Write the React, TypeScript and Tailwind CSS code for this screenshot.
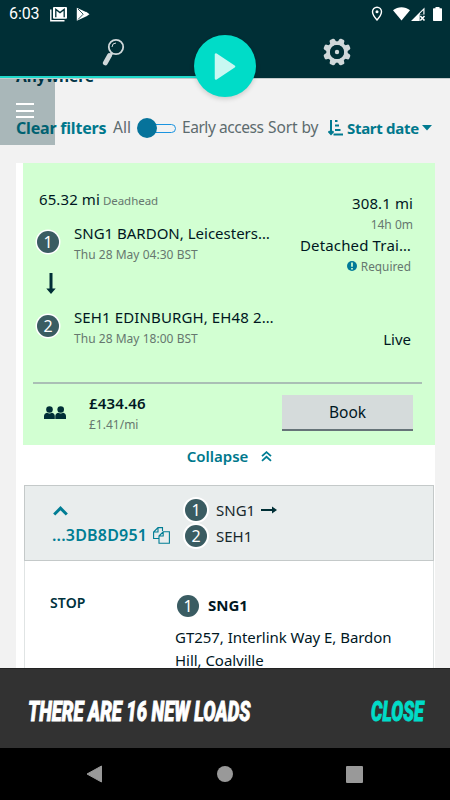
import { ReactNode } from 'react'
import { clsx } from 'clsx'

type BadgeProps = {
  children: ReactNode
  className?: string
}

// Numbered stop marker
function StopBadge({ children, className }: BadgeProps) {
  return (
    <span
      className={clsx(
        'flex size-[22px] shrink-0 items-center justify-center rounded-full bg-[#3a5c62] text-[16px] leading-none text-white',
        className
      )}
    >
      {children}
    </span>
  )
}

function StatusBar() {
  return (
    <div className="flex h-[28px] items-center pl-[9px] pr-[8px] text-white">
      <span className="font-[Roboto] text-[16px] leading-none tracking-[-0.1px]">6:03</span>
      {/* Gmail */}
      <svg className="ml-[11px]" width="17" height="15" viewBox="0 0 17 15" fill="none">
        <path d="M.8 2.500V13.700h13.700" stroke="#fff" strokeWidth="1.400" />
        <rect x="3" y="0" width="14" height="11.800" rx="1" fill="#fff" />
        <path d="M5.800 10.300V2.400L10 5.600l4.200-3.200v7.900" stroke="#002f36" strokeWidth="1.300" />
      </svg>
      {/* Play store */}
      <svg className="ml-[9px]" width="14" height="15" viewBox="0 0 14 15">
        <path d="M.8.800v13L10 9.400V5z" fill="#fff" />
        <path d="M2 2l5.200 5.200L2 12.500" fill="none" stroke="#002f36" strokeWidth=".8" />
        <path d="M8 7.200l2.200-2.400 3.300 2.400-3.300 2.400z" fill="#fff" />
      </svg>
      <div className="ml-auto flex items-center">
        <svg width="12" height="16" viewBox="0 0 12 16" fill="none">
          <path d="M6 1.300a4.500 4.500 0 0 0-4.500 4.500C1.500 9 6 14 6 14s4.500-5 4.500-8.200A4.500 4.500 0 0 0 6 1.300z" stroke="#fff" strokeWidth="1.400" />
          <circle cx="6" cy="5.800" r="1.500" fill="#fff" />
        </svg>
        <svg className="ml-[10px]" width="17" height="14" viewBox="0 0 17 14">
          <path d="M0 3.300C5-.700 12-.700 17 3.300L8.500 13.500z" fill="#fff" />
        </svg>
        <svg className="ml-[1px]" width="15" height="15" viewBox="0 0 15 15">
          <path d="M13.500.5v7H8.700v6.500H0z" fill="#fff" />
          <path d="M12.300 3.200v4.300H9V6.500z" fill="#002f36" />
          <path d="M9.300 9l4.200 4.500m0-4.500l-4.200 4.500" stroke="#fff" strokeWidth="1.600" />
        </svg>
        <svg className="ml-[7px]" width="9" height="14" viewBox="0 0 9 14">
          <path d="M2.500 0h4v1.300H8.300a.7.7 0 0 1 .7.7v11.300a.7.7 0 0 1-.7.7H.7a.7.7 0 0 1-.7-.7V2a.7.7 0 0 1 .7-.7h1.800z" fill="#fff" />
        </svg>
      </div>
    </div>
  )
}

const gearTeeth = [22.5, 67.5, 112.5, 157.5, 202.5, 247.5, 292.5, 337.5]

function Header() {
  return (
    <header className="relative z-10 h-[78px] shrink-0 bg-[#002f36]">
      <StatusBar />
      <div className="flex h-[48px] justify-between pl-[101px] pr-[99px] pt-[10px]">
        <svg width="24" height="28" viewBox="0 0 24 28" fill="none">
          <circle cx="15" cy="9" r="7.200" stroke="#d0d8da" strokeWidth="1.800" />
          <path d="M11 9a4 4 0 0 1 4-4" stroke="#d0d8da" strokeWidth="1" />
          <path d="M8.500 17.500L4.300 25" stroke="#d0d8da" strokeWidth="4.800" strokeLinecap="round" />
          <path d="M11.300 14.800l-2 3" stroke="#d0d8da" strokeWidth="2.500" />
        </svg>
        <svg width="28" height="28" viewBox="-14 -14 28 28" fill="#d0d8da">
          {gearTeeth.map((angle) => (
            <path
              key={angle}
              d="M-3.500-8L-2.800-12.400Q-2.500-13.800-1.200-13.800H1.200Q2.500-13.800 2.800-12.400L3.500-8z"
              transform={`rotate(${angle})`}
            />
          ))}
          <circle r="8.900" fill="none" stroke="#d0d8da" strokeWidth="3.600" />
          <circle r="6.900" fill="#002f36" />
          <circle r="2.200" />
        </svg>
      </div>
      {/* Active tab indicator */}
      <div className="h-[2px] w-[225px] bg-[#1fd9cb]" />
      <button className="absolute left-[194px] top-[35px] flex size-[62px] items-center justify-center rounded-full bg-[#00dcc8] shadow-[0_2px_5px_rgba(0,0,0,0.16)]">
        <svg width="22" height="27" viewBox="0 0 22 27">
          <path d="M2 1.500v24L20 13.500z" fill="#c8f8f2" stroke="#c8f8f2" strokeWidth="2.500" strokeLinejoin="round" />
        </svg>
      </button>
    </header>
  )
}

function Filters() {
  return (
    <div className="relative h-[85px] shrink-0">
      <div className="h-[10px] pl-[16px]">
        <div className="-translate-y-[15px] text-[15.500px] font-bold leading-[24px] text-[#003648]">Anywhere</div>
      </div>
      <div className="mt-[27px] flex h-[24px] items-center whitespace-nowrap pl-[16px] text-[15.500px] text-[#5d6b6e]">
        <span className="w-[97px] text-[16px] font-bold tracking-[-0.200px] text-[#00788c]">Clear filters</span>
        <span className="w-[24px]">All</span>
        <span className="flex w-[45px] items-center">
          <span className="z-[1] size-[20px] rounded-full bg-[#06739b]" />
          <span className="-ml-[2px] h-[9px] w-[21px] rounded-r-full border border-[#1b94e0]" />
        </span>
        <span className="w-[86px] tracking-[-0.450px]">Early access</span>
        <span className="w-[60px] tracking-[-0.100px]">Sort by</span>
        <svg className="shrink-0" width="15" height="16" viewBox="0 0 15 16" fill="none" stroke="#007a90">
          <path d="M3 0v14M.5 11.300L3 14l2.500-2.700" strokeWidth="2" />
          <path d="M7 1h2.500M7 5.500h4M7 10h5.500M5.500 14.500H15" strokeWidth="1.900" />
        </svg>
        <span className="ml-[4px] w-[75px] text-[15px] font-bold tracking-[-0.300px] text-[#00788c]">Start date</span>
        <svg className="shrink-0" width="10" height="6" viewBox="0 0 10 6" fill="#007a90">
          <path d="M0 0h10L5 5.500z" />
        </svg>
      </div>
      {/* Drawer handle floats over the filters */}
      <div className="absolute left-0 top-0 h-[66px] w-[54.500px] bg-[#002f36]/30 pl-[16px] pt-[24px]">
        <div className="h-[2px] w-[18px] bg-white" />
        <div className="mt-[4.500px] h-[2px] w-[18px] bg-white" />
        <div className="mt-[4.500px] h-[2px] w-[18px] bg-white" />
      </div>
    </div>
  )
}

function LoadCard() {
  return (
    <div className="ml-[7px] h-[282px] bg-[#d2ffd2] pl-[10px] pr-[13px] text-[#00171f]">
      <div className="flex h-[221px] border-b-2 border-[#aabfb5]">
        <div className="w-[245px] pt-[24px]">
          <div className="flex h-[24px] items-baseline gap-[3px] whitespace-nowrap pl-[6px]">
            <span className="text-[15px] leading-[24px] tracking-[0.100px]">65.32 mi</span>
            <span className="text-[11.500px] leading-[24px] tracking-[-0.050px] text-[#66776f]">Deadhead</span>
          </div>
          <div className="flex pl-[4px] pt-[10px]">
            <StopBadge className="mt-[10px] ring-[1.500px] ring-white">1</StopBadge>
            <div className="ml-[15px]">
              <div className="whitespace-nowrap text-[15px] leading-[24px]">SNG1 BARDON, Leicesters…</div>
              <div className="whitespace-nowrap text-[12px] leading-[20px] tracking-[0.030px] text-[#66776f]">Thu 28 May 04:30 BST</div>
            </div>
          </div>
          <svg className="ml-[12px] mt-[8px]" width="12" height="22" viewBox="0 0 12 22">
            <path d="M4.500 0h3v15.500h3.200L6 21 1.300 15.500h3.200z" fill="#002f36" />
          </svg>
          <div className="flex pl-[4px] pt-[10px]">
            <StopBadge className="mt-[10px] ring-[1.500px] ring-white">2</StopBadge>
            <div className="ml-[15px]">
              <div className="whitespace-nowrap text-[15px] leading-[24px] tracking-[0.120px]">SEH1 EDINBURGH, EH48 2…</div>
              <div className="whitespace-nowrap text-[12px] leading-[20px] tracking-[0.030px] text-[#66776f]">Thu 28 May 18:00 BST</div>
            </div>
          </div>
        </div>
        <div className="flex flex-1 flex-col items-end whitespace-nowrap pr-[9px] pt-[28px]">
          <div className="text-[15px] leading-[24px] tracking-[0.100px]">308.1 mi</div>
          <div className="text-[12px] leading-[19px] text-[#66776f]">14h 0m</div>
          <div className="mr-[2px] text-[15px] leading-[22px] tracking-[0.150px]">Detached Trai…</div>
          <div className="mr-[2px] flex items-center gap-[4px] text-[11.800px] leading-[20px] text-[#66776f]">
            <svg width="10" height="10" viewBox="0 0 10 10">
              <circle cx="5" cy="5" r="5" fill="#007a98" />
              <path d="M5 1.500v4.300M5 7v1.500" stroke="#d2ffd2" strokeWidth="1.700" />
            </svg>
            Required
          </div>
          <div className="mr-[2px] mt-[51px] text-[15px] leading-[24px]">Live</div>
        </div>
      </div>
      <div className="flex h-[61px]">
        <svg className="ml-[11px] mt-[22px]" width="22" height="14" viewBox="0 0 22 14" fill="#002f36">
          <circle cx="5.500" cy="3.500" r="3.300" />
          <path d="M0 13V10.200Q0 7.400 3 6.800Q5.500 8.100 8 6.800Q10.800 7.400 10.800 10.200V13z" />
          <circle cx="16.700" cy="3.500" r="3.300" />
          <path d="M11.300 13V10.200Q11.300 7.400 14.200 6.800Q16.700 8.100 19.200 6.800Q22 7.400 22 10.200V13z" />
        </svg>
        <div className="ml-[23px] pt-[8px]">
          <div className="text-[15px] font-semibold leading-[23px] tracking-[0.150px]">£434.46</div>
          <div className="text-[12px] leading-[20px] text-[#66776f]">£1.41/mi</div>
        </div>
        <button className="ml-auto mr-[9px] mt-[11px] h-[36px] w-[131px] border-b-2 border-[#667378] bg-[#d5dbdb] text-[15.500px] leading-[33px]">
          Book
        </button>
      </div>
    </div>
  )
}

function Details() {
  return (
    <div className="ml-[8px] mr-px">
      <div className="flex h-[76px] border border-[#c4c9c9] bg-[#e9eded]">
        <div className="w-[160px] pl-[27px] pt-[20px] text-[#007d94]">
          <svg className="ml-px" width="15" height="10" viewBox="0 0 15 10" fill="none">
            <path d="M1.200 8.500L7.500 2.200l6.300 6.300" stroke="#007d94" strokeWidth="3" />
          </svg>
          <div className="mt-[7px] flex h-[24px] items-center">
            <span className="w-[95px] text-[16px] font-semibold tracking-[0.200px]">...3DB8D951</span>
            <svg className="ml-[6px]" width="17" height="17" viewBox="0 0 17 17" fill="none" stroke="#007d94" strokeWidth="1.100">
              <path d="M6 11.500H.6V5L5 .6h4.500V4M5 .6V5H.6" />
              <path d="M6 9l4.200-4.200h6.200v11.500H6zM10.200 4.800V9H6" />
            </svg>
          </div>
        </div>
        <div className="pt-[11px] text-[15px] text-[#16282c]">
          <div className="flex h-[26px] items-center">
            <StopBadge className="ring-2 ring-white">1</StopBadge>
            <span className="ml-[9px]">SNG1</span>
            <svg className="ml-[6px]" width="16" height="8" viewBox="0 0 16 8">
              <path d="M0 3h11V.5L16 4l-5 3.500V5H0z" fill="#002f36" />
            </svg>
          </div>
          <div className="flex h-[26px] items-center">
            <StopBadge className="ring-2 ring-white">2</StopBadge>
            <span className="ml-[9px]">SEH1</span>
          </div>
        </div>
      </div>
      <div className="flex h-[240px] border-x border-[#e0e4e4]">
        <div className="w-[150px] pl-[25px] pt-[31px] text-[14px] font-semibold leading-[22px] tracking-[0.150px] text-[#00323d]">STOP</div>
        <div className="pt-[32px] text-[#00171f]">
          <div className="flex h-[25px] items-center pl-[2px]">
            <StopBadge>1</StopBadge>
            <span className="ml-[9px] text-[15px] font-bold">SNG1</span>
          </div>
          <div className="mt-[8px] w-[235px] whitespace-nowrap text-[15px] leading-[23px] tracking-[-0.040px]">
            GT257, Interlink Way E, Bardon
            <br />
            Hill, Coalville
          </div>
        </div>
      </div>
    </div>
  )
}

export default function App() {
  return (
    <div className="flex h-[800px] w-[450px] flex-col overflow-hidden bg-[#f2f2f2] font-['Noto_Sans','Open_Sans',sans-serif]">
      <Header />
      <main className="flex h-[590px] shrink-0 flex-col overflow-hidden border-t border-[#c5cccd]">
        <Filters />
        <div className="-mt-px ml-[16px] mr-[15px] flex-1 bg-white">
          <LoadCard />
          <div className="flex h-[40px] items-start justify-center whitespace-nowrap pl-[8px] text-[15px] font-semibold leading-[22px] text-[#00788c]">
            <span>Collapse</span>
            <svg className="ml-[13px] mt-[6px]" width="11" height="11" viewBox="0 0 11 11" fill="none" stroke="#007d94" strokeWidth="1.800">
              <path d="M1 5.200L5.500 1.200 10 5.200M1 9.800l4.500-4 4.500 4" />
            </svg>
          </div>
          <Details />
        </div>
      </main>
      <div className="flex h-[80px] shrink-0 items-center justify-between whitespace-nowrap border-t border-[#222] bg-[#323232] pl-[28px] pr-[26px] font-['Roboto',sans-serif] text-[27px] font-black italic leading-none">
        <div className="w-[223px]">
          <div className="w-max origin-left scale-x-[0.682] pt-[8px] text-white [-webkit-text-stroke:0.900px]">THERE ARE 16 NEW LOADS</div>
        </div>
        <div className="flex w-[53px] justify-end">
          <div className="w-max origin-right scale-x-[0.660] pt-[8px] text-[#00dcc8] [-webkit-text-stroke:0.900px]">CLOSE</div>
        </div>
      </div>
      <nav className="flex h-[52px] shrink-0 items-center justify-between bg-black pl-[86px] pr-[87px]">
        <svg width="16" height="18" viewBox="0 0 16 18">
          <path d="M15.500 1v16L1 9z" fill="#999" stroke="#999" strokeLinejoin="round" />
        </svg>
        <span className="ml-[2px] size-[16px] rounded-full bg-[#999]" />
        <span className="size-[17px] rounded-[1px] bg-[#999]" />
      </nav>
    </div>
  )
}
